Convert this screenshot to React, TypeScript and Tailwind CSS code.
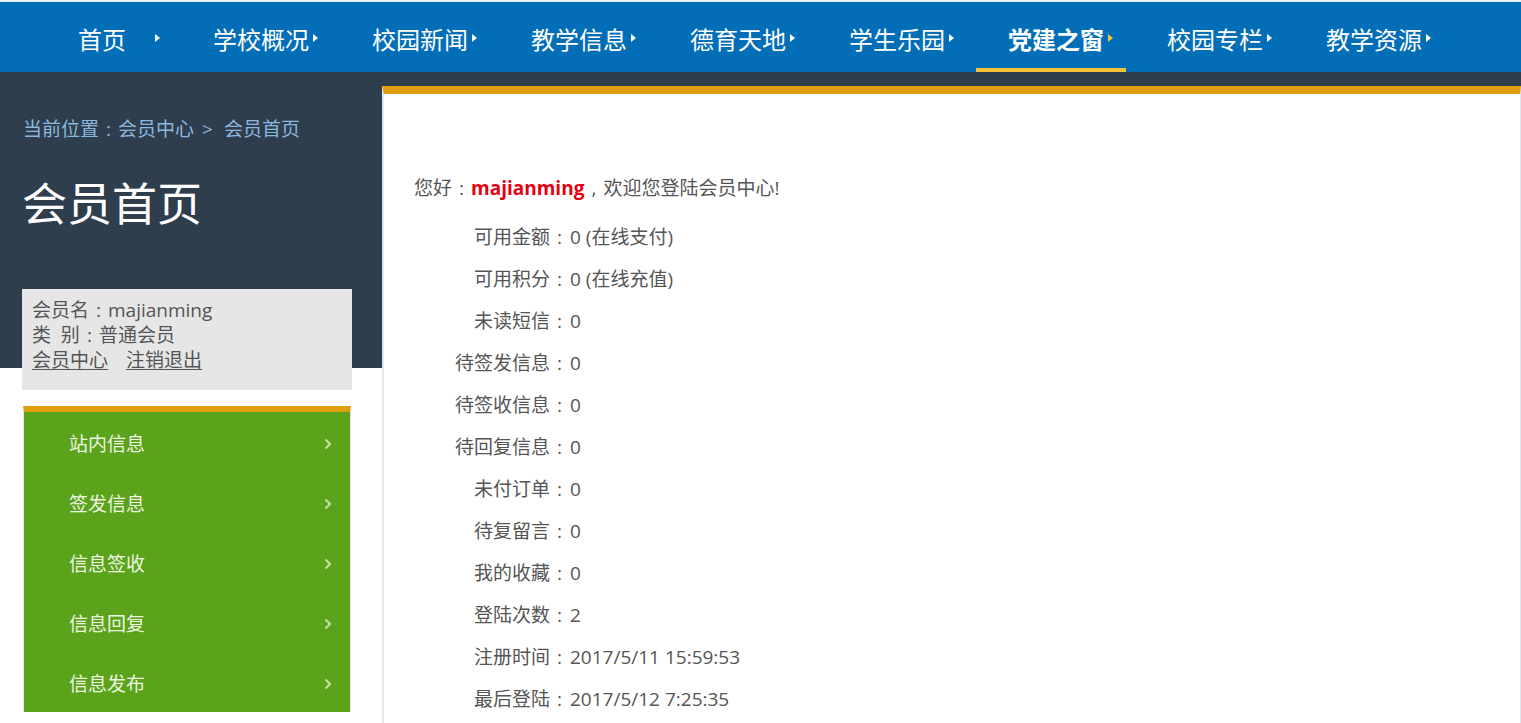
import React from "react";

const navItems = ["学校概况", "校园新闻", "教学信息", "德育天地", "学生乐园", "党建之窗", "校园专栏", "教学资源"];

const stats: [string, string][] = [
  ["可用金额", "0 (在线支付)"],
  ["可用积分", "0 (在线充值)"],
  ["未读短信", "0"],
  ["待签发信息", "0"],
  ["待签收信息", "0"],
  ["待回复信息", "0"],
  ["未付订单", "0"],
  ["待复留言", "0"],
  ["我的收藏", "0"],
  ["登陆次数", "2"],
  ["注册时间", "2017/5/11 15:59:53"],
  ["最后登陆", "2017/5/12 7:25:35"],
];

const menu = ["站内信息", "签发信息", "信息签收", "信息回复", "信息发布"];

// full-width colon drawn centred in its em box, like the YaHei rendering
const Colon = () => <span className="inline-block w-[1em] text-center">:</span>;

const Arrow = ({ active }: { active?: boolean }) => (
  <span
    className={`inline-block w-0 h-0 border-y-[4.5px] border-y-transparent border-l-[5px] mb-[4px] ${
      active ? "border-l-[#f6c337]" : "border-l-white"
    }`}
  />
);

export default function App() {
  return (
    <div className="min-h-screen bg-white font-['Open_Sans','Noto_Sans_CJK_SC',sans-serif]">
      <div className="h-[2px] bg-[#e9f2f8]" />

      {/* top nav */}
      <nav className="h-[70px] bg-[#036eb8] flex pl-[46px] text-white text-[24px]">
        <a className="w-[135px] h-full flex items-center pl-[32px] pt-[5px]">
          <span>首页</span>
          <span className="ml-[29px] flex"><Arrow /></span>
        </a>
        {navItems.map((item) => {
          const active = item === "党建之窗";
          return (
            <div key={item} className="w-[159px] h-full">
              <a
                className={`w-[150px] h-full flex items-center pl-[32px] pt-[9px] border-b-[4px] ${
                  active ? "border-b-[#f6c337] font-bold" : "border-b-transparent"
                }`}
              >
                <span>{item}</span>
                <span className="ml-[4px] flex"><Arrow active={active} /></span>
              </a>
            </div>
          );
        })}
      </nav>

      <div className="flex bg-[linear-gradient(to_bottom,#2f3e4d_296px,#ffffff_296px)]">
        {/* left column */}
        <aside className="w-[382px] shrink-0 pt-[45px]">
          <div className="pl-[23px] text-[19px] leading-[25px] text-[#8bb8df]">
            当前位置<Colon />会员中心<span className="ml-[8px] mr-[11px]">&gt;</span>会员首页
          </div>
          <h1 className="pl-[22px] mt-[32px] text-[45px] leading-[60px] text-white">会员首页</h1>

          <div className="ml-[22px] mt-[55px] w-[330px] bg-[#e6e6e6] pl-[10px] pt-[9px] pb-[17px] text-[19px] leading-[25px] text-[#555]">
            <div>会员名<Colon />majianming</div>
            <div>类&nbsp;&nbsp;别<Colon />普通会员</div>
            <div className="flex gap-[18px]">
              <a className="underline underline-offset-2">会员中心</a>
              <a className="underline underline-offset-2">注销退出</a>
            </div>
          </div>

          <ul className="ml-[23px] mt-[16px] w-[328px] border-x border-[#e3e6e8] border-t-[6px] border-t-[#e09f0e] bg-[#5aa31a]">
            {menu.map((m) => (
              <li key={m} className="h-[60px] flex items-center justify-between pl-[45px] pr-[18px] pt-[4px] text-[19px] text-[#eef6e2]">
                <span>{m}</span>
                <svg width="8" height="12" viewBox="0 0 8 12">
                  <polyline points="1.5,1.5 6,6 1.5,10.5" fill="none" stroke="#bfe09a" strokeWidth="2.2" />
                </svg>
              </li>
            ))}
          </ul>
        </aside>

        {/* main panel */}
        <main className="flex-1 mt-[14px] min-h-[640px] bg-white border-t-[8px] border-t-[#e09f0e] border-l-2 border-l-[#dde8ef] border-r border-r-[#dde8ef] pl-[30px] pt-[82px] text-[19px] leading-[25px] text-[#555]">
          <p>
            您好<Colon /><span className="font-bold text-[#e60012]">majianming</span>
            <span className="inline-block w-[1em] text-center">,</span>欢迎您登陆会员中心!
          </p>
          <div className="mt-[15px]">
            {stats.map(([k, v]) => (
              <div key={k} className="h-[42px] grid grid-cols-[155px_1fr] items-center">
                <span className="text-right">{k}<Colon /></span>
                <span className="pl-[1px]">{v}</span>
              </div>
            ))}
          </div>
        </main>
      </div>
    </div>
  );
}
